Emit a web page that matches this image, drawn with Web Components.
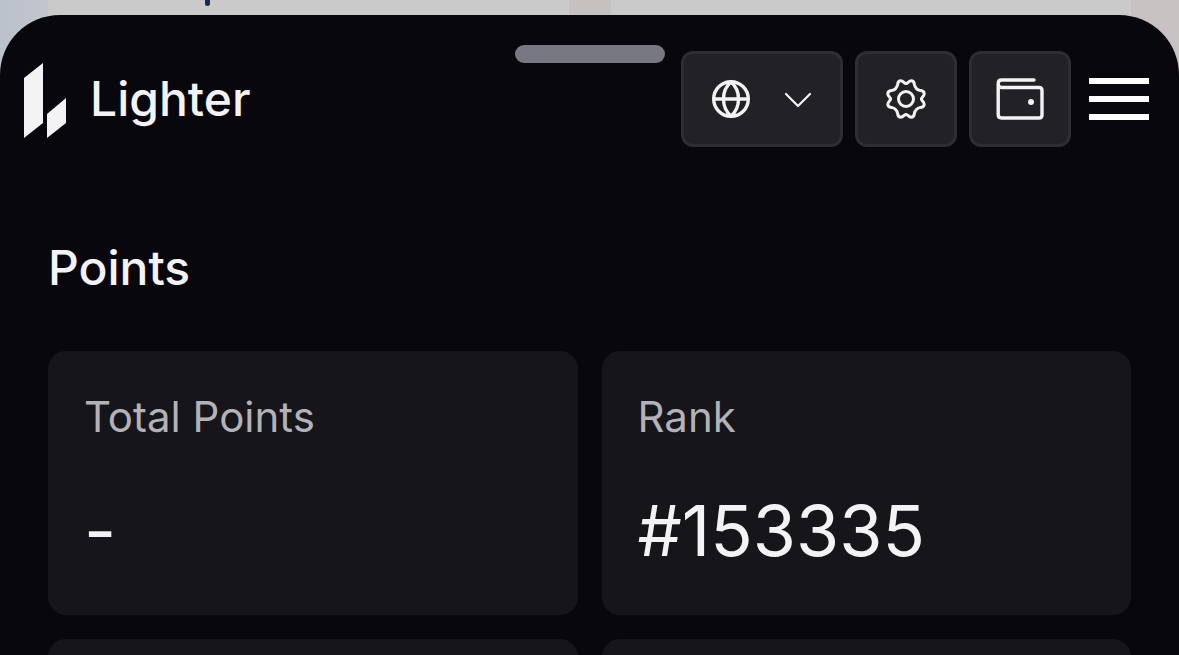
<!DOCTYPE html>
<html lang="en">
<head>
<meta charset="utf-8">
<meta name="viewport" content="width=device-width, initial-scale=1">
<title>Lighter</title>
<style>
html, body {
  margin: 0;
  height: 100%;
}

body {
  display: flex;
  flex-direction: column;
  overflow: hidden;
  background: #08070d;
  color: #f3f3f5;
  font-family: Inter, "Liberation Sans", sans-serif;
}
</style>
</head>
<body>
<page-backdrop></page-backdrop>
<bottom-sheet>
  <app-header>
    <app-logo>Lighter</app-logo>
    <icon-button slot="actions" label="Language" icon="globe" menu></icon-button>
    <icon-button slot="actions" label="Settings" icon="gear"></icon-button>
    <icon-button slot="actions" label="Wallet" icon="wallet"></icon-button>
    <menu-button slot="actions"></menu-button>
  </app-header>
  <stats-section>
    <span slot="title">Points</span>
    <stat-card><span slot="label">Total Points</span>-</stat-card>
    <stat-card><span slot="label">Rank</span>#153335</stat-card>
    <stat-card></stat-card>
    <stat-card></stat-card>
  </stats-section>
</bottom-sheet>

<script>
const icons = {
  globe: `
<svg width="40" height="40" viewBox="0 0 40 40" fill="none" stroke="currentColor" stroke-width="3.4">
  <circle cx="20" cy="20" r="17.3"/>
  <path d="M3 20h34"/>
  <path d="M20 3c-4.800 4-7.500 10-7.500 17s2.700 13 7.500 17c4.800-4 7.500-10 7.500-17S24.800 7 20 3z"/>
</svg>`,
  gear: `
<svg width="42" height="42" viewBox="-21 -21 42 42" fill="none" stroke="currentColor" stroke-width="3" stroke-linecap="round">
  <circle r="7.5"/>
  <path id="teeth" d="M0-15.500C2-15.500 2.500-18.200 5.200-18.200Q8-18.200 8.400-14.500C9-11.400 11.400-9 14.500-8.400Q18.200-8 18.200-5.200C18.200-2.500 15.500-2 15.500 0"/>
  <use href="#teeth" transform="rotate(90)"/>
  <use href="#teeth" transform="rotate(180)"/>
  <use href="#teeth" transform="rotate(270)"/>
</svg>`,
  wallet: `
<svg width="48" height="42" viewBox="0 0 48 42" fill="none" stroke="currentColor" stroke-width="3.4" stroke-linecap="round" stroke-linejoin="round">
  <path d="M38 2H5.500Q2.200 2 2.200 5.500V36.500Q2.200 40 5.500 40H43Q46 40 46 37V12.500Q46 9.500 43 9.500H5.500Q2.200 9.500 2.200 6"/>
  <circle cx="35" cy="24" r="3" fill="currentColor" stroke="none"/>
</svg>`,
  chevron: `
<svg width="30" height="30" viewBox="0 0 30 30" fill="none" stroke="currentColor" stroke-width="2.2" stroke-linecap="round" stroke-linejoin="round">
  <path d="M3 10l12 12L27 10"/>
</svg>`
};

// the dimmed page that shows above the sheet
class PageBackdrop extends HTMLElement {
  constructor() {
    super();
    this.attachShadow({mode: 'open'}).innerHTML = `
<style>
:host {
  position: fixed;
  inset: 0 0 auto;
  height: 90px;
  display: grid;
  grid-template-columns: 1fr 1fr;
  gap: 42px;
  padding: 0 48px;
  background: linear-gradient(90deg, #bcc1ce, #c3c5cc 48px, #c6c1c1 50%, #c8c1c2);
}

div {
  background: #cacaca;
}

i {
  display: block;
  width: 5px;
  height: 6px;
  margin-left: 157px;
  border-radius: 0 0 3px 3px;
  background: #1d2947;
}
</style>
<div><i></i></div>
<div></div>
`;
  }
}

class BottomSheet extends HTMLElement {
  constructor() {
    super();
    this.attachShadow({mode: 'open'}).innerHTML = `
<style>
:host {
  display: block;
  position: relative;
  flex: 1;
  min-height: 0;
  margin-top: 15px;
  overflow: hidden;
  border-radius: 60px 60px 0 0;
  background: #08070d;
}

.handle {
  position: absolute;
  top: 30px;
  left: 50%;
  width: 150px;
  height: 18px;
  margin-left: -75px;
  border-radius: 9px;
  background: #777881;
}
</style>
<div class="handle"></div>
<slot></slot>
`;
  }
}

class AppHeader extends HTMLElement {
  constructor() {
    super();
    this.attachShadow({mode: 'open'}).innerHTML = `
<style>
:host {
  display: block;
}

header {
  display: flex;
  align-items: center;
  justify-content: space-between;
  padding: 36px 30px 36px 24px;
}

.actions {
  display: flex;
  align-items: center;
  gap: 12px;
}
</style>
<header>
  <slot></slot>
  <div class="actions"><slot name="actions"></slot></div>
</header>
`;
  }
}

class AppLogo extends HTMLElement {
  constructor() {
    super();
    this.attachShadow({mode: 'open'}).innerHTML = `
<style>
:host {
  display: block;
}

a {
  display: flex;
  align-items: center;
  gap: 24px;
  color: inherit;
  font-size: 48px;
  font-weight: 500;
  line-height: 74px;
  text-decoration: none;
}
</style>
<a href="#">
  <svg width="42" height="78" viewBox="0 0 42 78" fill="currentColor" aria-hidden="true">
    <path d="M0 18L19 3V63L0 78zM23 54L42 38V63L23 78z"/>
  </svg>
  <slot></slot>
</a>
`;
  }
}

class IconButton extends HTMLElement {
  constructor() {
    super();
    const menu = this.hasAttribute('menu');
    this.attachShadow({mode: 'open'}).innerHTML = `
<style>
:host {
  display: block;
}

button {
  display: flex;
  align-items: center;
  justify-content: center;
  gap: 32px;
  box-sizing: border-box;
  min-width: 102px;
  height: 96px;
  margin: 0;
  padding: 0 24px;
  border: 3px solid #2e2d33;
  border-radius: 12px;
  background: #222126;
  color: #f3f3f5;
}

:host([menu]) button {
  padding: 0 27px;
}
</style>
<button type="button" aria-label="${this.getAttribute('label')}">
  ${icons[this.getAttribute('icon')]}
  ${menu ? icons.chevron : ''}
</button>
`;
  }
}

class MenuButton extends HTMLElement {
  constructor() {
    super();
    this.attachShadow({mode: 'open'}).innerHTML = `
<style>
:host {
  display: block;
  margin-left: 6px;
}

button {
  display: grid;
  gap: 12px;
  width: 60px;
  padding: 0;
  border: 0;
  background: none;
}

span {
  height: 6px;
  background: #fff;
}
</style>
<button type="button" aria-label="Menu"><span></span><span></span><span></span></button>
`;
  }
}

class StatsSection extends HTMLElement {
  constructor() {
    super();
    this.attachShadow({mode: 'open'}).innerHTML = `
<style>
:host {
  display: block;
  padding: 48px;
}

h1 {
  margin: 0;
  padding-bottom: 46px;
  font-size: 48px;
  font-weight: 500;
  line-height: 74px;
}

.cards {
  display: grid;
  grid-template-columns: 1fr 1fr;
  gap: 24px;
}
</style>
<h1><slot name="title"></slot></h1>
<div class="cards"><slot></slot></div>
`;
  }
}

class StatCard extends HTMLElement {
  constructor() {
    super();
    this.attachShadow({mode: 'open'}).innerHTML = `
<style>
:host {
  display: grid;
  gap: 36px;
  padding: 36px;
  border-radius: 18px;
  background: #16151a;
}

.label {
  min-height: 60px;
  color: #b3b2b8;
  font-size: 42px;
  line-height: 60px;
}

.value {
  min-height: 96px;
  font-size: 70px;
  line-height: 96px;
}
</style>
<div class="label"><slot name="label"></slot></div>
<div class="value"><slot></slot></div>
`;
  }
}

customElements.define('page-backdrop', PageBackdrop);
customElements.define('bottom-sheet', BottomSheet);
customElements.define('app-header', AppHeader);
customElements.define('app-logo', AppLogo);
customElements.define('icon-button', IconButton);
customElements.define('menu-button', MenuButton);
customElements.define('stats-section', StatsSection);
customElements.define('stat-card', StatCard);
</script>
</body>
</html>
